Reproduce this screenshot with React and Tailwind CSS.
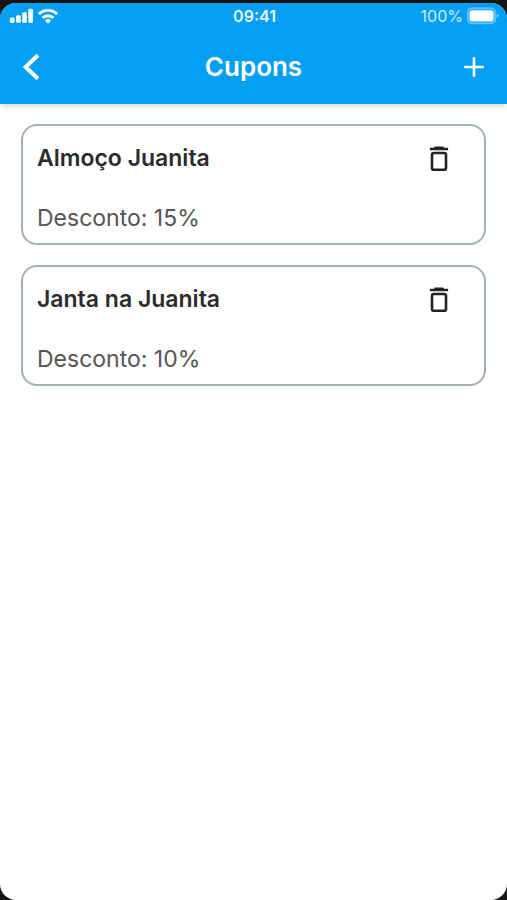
import React, { useState } from 'react';

const initialCoupons = [
  { id: 1, name: "Almoço Juanita", discount: 15 },
  { id: 2, name: "Janta na Juanita", discount: 10 },
];

const SignalIcon = () => (
  <svg width="24" height="16" viewBox="0 0 24 16" fill="currentColor" aria-hidden="true">
    <rect x="0" y="9.5" width="4.6" height="5.5" rx="1.4" />
    <rect x="6.1" y="7.2" width="4.6" height="7.8" rx="1.4" />
    <rect x="12.2" y="4.2" width="4.6" height="10.8" rx="1.4" />
    <rect x="18.3" y="0.8" width="4.6" height="14.2" rx="1.4" />
  </svg>
);

const WifiIcon = () => (
  <svg width="20" height="16" viewBox="0 0 20 16" fill="none" stroke="currentColor" strokeWidth="2.9" aria-hidden="true">
    <path d="M1 6.1a12.8 12.8 0 0 1 18 0" />
    <path d="M4.6 10a7.7 7.7 0 0 1 10.8 0" />
    <path d="M10 15.4l-3.1-3a4.4 4.4 0 0 1 6.2 0z" fill="currentColor" stroke="none" />
  </svg>
);

const BatteryIcon = () => (
  <svg width="32" height="18" viewBox="0 0 32 18" fill="none" aria-hidden="true">
    <rect x="0.8" y="1.4" width="27.4" height="15" rx="4" stroke="white" strokeOpacity="0.4" strokeWidth="1.6" />
    <rect x="2.4" y="3.2" width="24.2" height="11.4" rx="2.6" fill="white" />
    <path d="M29.6 6.4q2 .8 2 2.5t-2 2.5z" fill="white" fillOpacity="0.45" />
  </svg>
);

const TrashIcon = () => (
  <svg width="20" height="28" viewBox="0 0 20 28" fill="none" stroke="currentColor" aria-hidden="true">
    <path d="M0.9 5h18.2" strokeWidth="2.4" />
    <path d="M6.4 3.6h7.2" strokeWidth="2.4" strokeLinecap="round" />
    <rect x="3" y="9" width="14" height="16.8" rx="1.8" strokeWidth="2.6" />
  </svg>
);

const StatusBar = () => (
  <div className="grid grid-cols-3 items-center h-[26px] pl-2.5 pr-2">
    <div className="flex items-center gap-1">
      <SignalIcon />
      <WifiIcon />
    </div>
    <span className="text-center text-base font-semibold opacity-90">09:41</span>
    <div className="flex items-center justify-end gap-1">
      <span className="text-base opacity-80">100%</span>
      <BatteryIcon />
    </div>
  </div>
);

const CouponCard = ({ coupon, onDelete }) => (
  <li className="border-2 border-[#a4b0b5] rounded-2xl pl-3.5 pr-8 pt-4 pb-[9px]">
    <div className="flex items-center justify-between">
      <h2 className="text-[23px] leading-8 font-semibold text-[#2b2b2b]">{coupon.name}</h2>
      <button
        type="button"
        aria-label={`Excluir ${coupon.name}`}
        onClick={() => onDelete(coupon.id)}
        className="px-[3px] text-[#222222]"
      >
        <TrashIcon />
      </button>
    </div>
    <p className="mt-7 text-[23px] leading-8 text-[#555555]">Desconto: {coupon.discount}%</p>
  </li>
);

const App = () => {
  const [coupons, setCoupons] = useState(initialCoupons);

  const handleDelete = (id) => {
    setCoupons((prev) => prev.filter((item) => item.id !== id));
  };

  return (
    <div className="min-h-screen flex flex-col bg-[#151515] pt-[3px] font-['Inter',sans-serif]">
      <div className="flex-1 flex flex-col bg-white rounded-2xl overflow-hidden">
        <header className="bg-[#039ff2] text-white shadow-md">
          <StatusBar />
          <div className="grid grid-cols-3 items-center h-[75px] px-5">
            <button type="button" aria-label="Voltar" className="justify-self-start">
              <svg width="22" height="28" viewBox="0 0 22 28" fill="none" stroke="currentColor" strokeWidth="4" aria-hidden="true">
                <path d="M18 2.2L5.6 14 18 25.8" />
              </svg>
            </button>
            <h1 className="text-center text-[26px] leading-8 font-semibold">Cupons</h1>
            <button type="button" aria-label="Adicionar cupom" className="justify-self-end">
              <svg width="26" height="26" viewBox="0 0 26 26" fill="none" stroke="currentColor" strokeWidth="2.6" aria-hidden="true">
                <path d="M13 3.2v19.6M3.2 13h19.6" />
              </svg>
            </button>
          </div>
        </header>

        <main className="flex-1 px-[21px] py-5">
          <ul className="flex flex-col gap-5">
            {coupons.map((coupon) => (
              <CouponCard key={coupon.id} coupon={coupon} onDelete={handleDelete} />
            ))}
          </ul>
        </main>
      </div>
    </div>
  );
};

export default App;
